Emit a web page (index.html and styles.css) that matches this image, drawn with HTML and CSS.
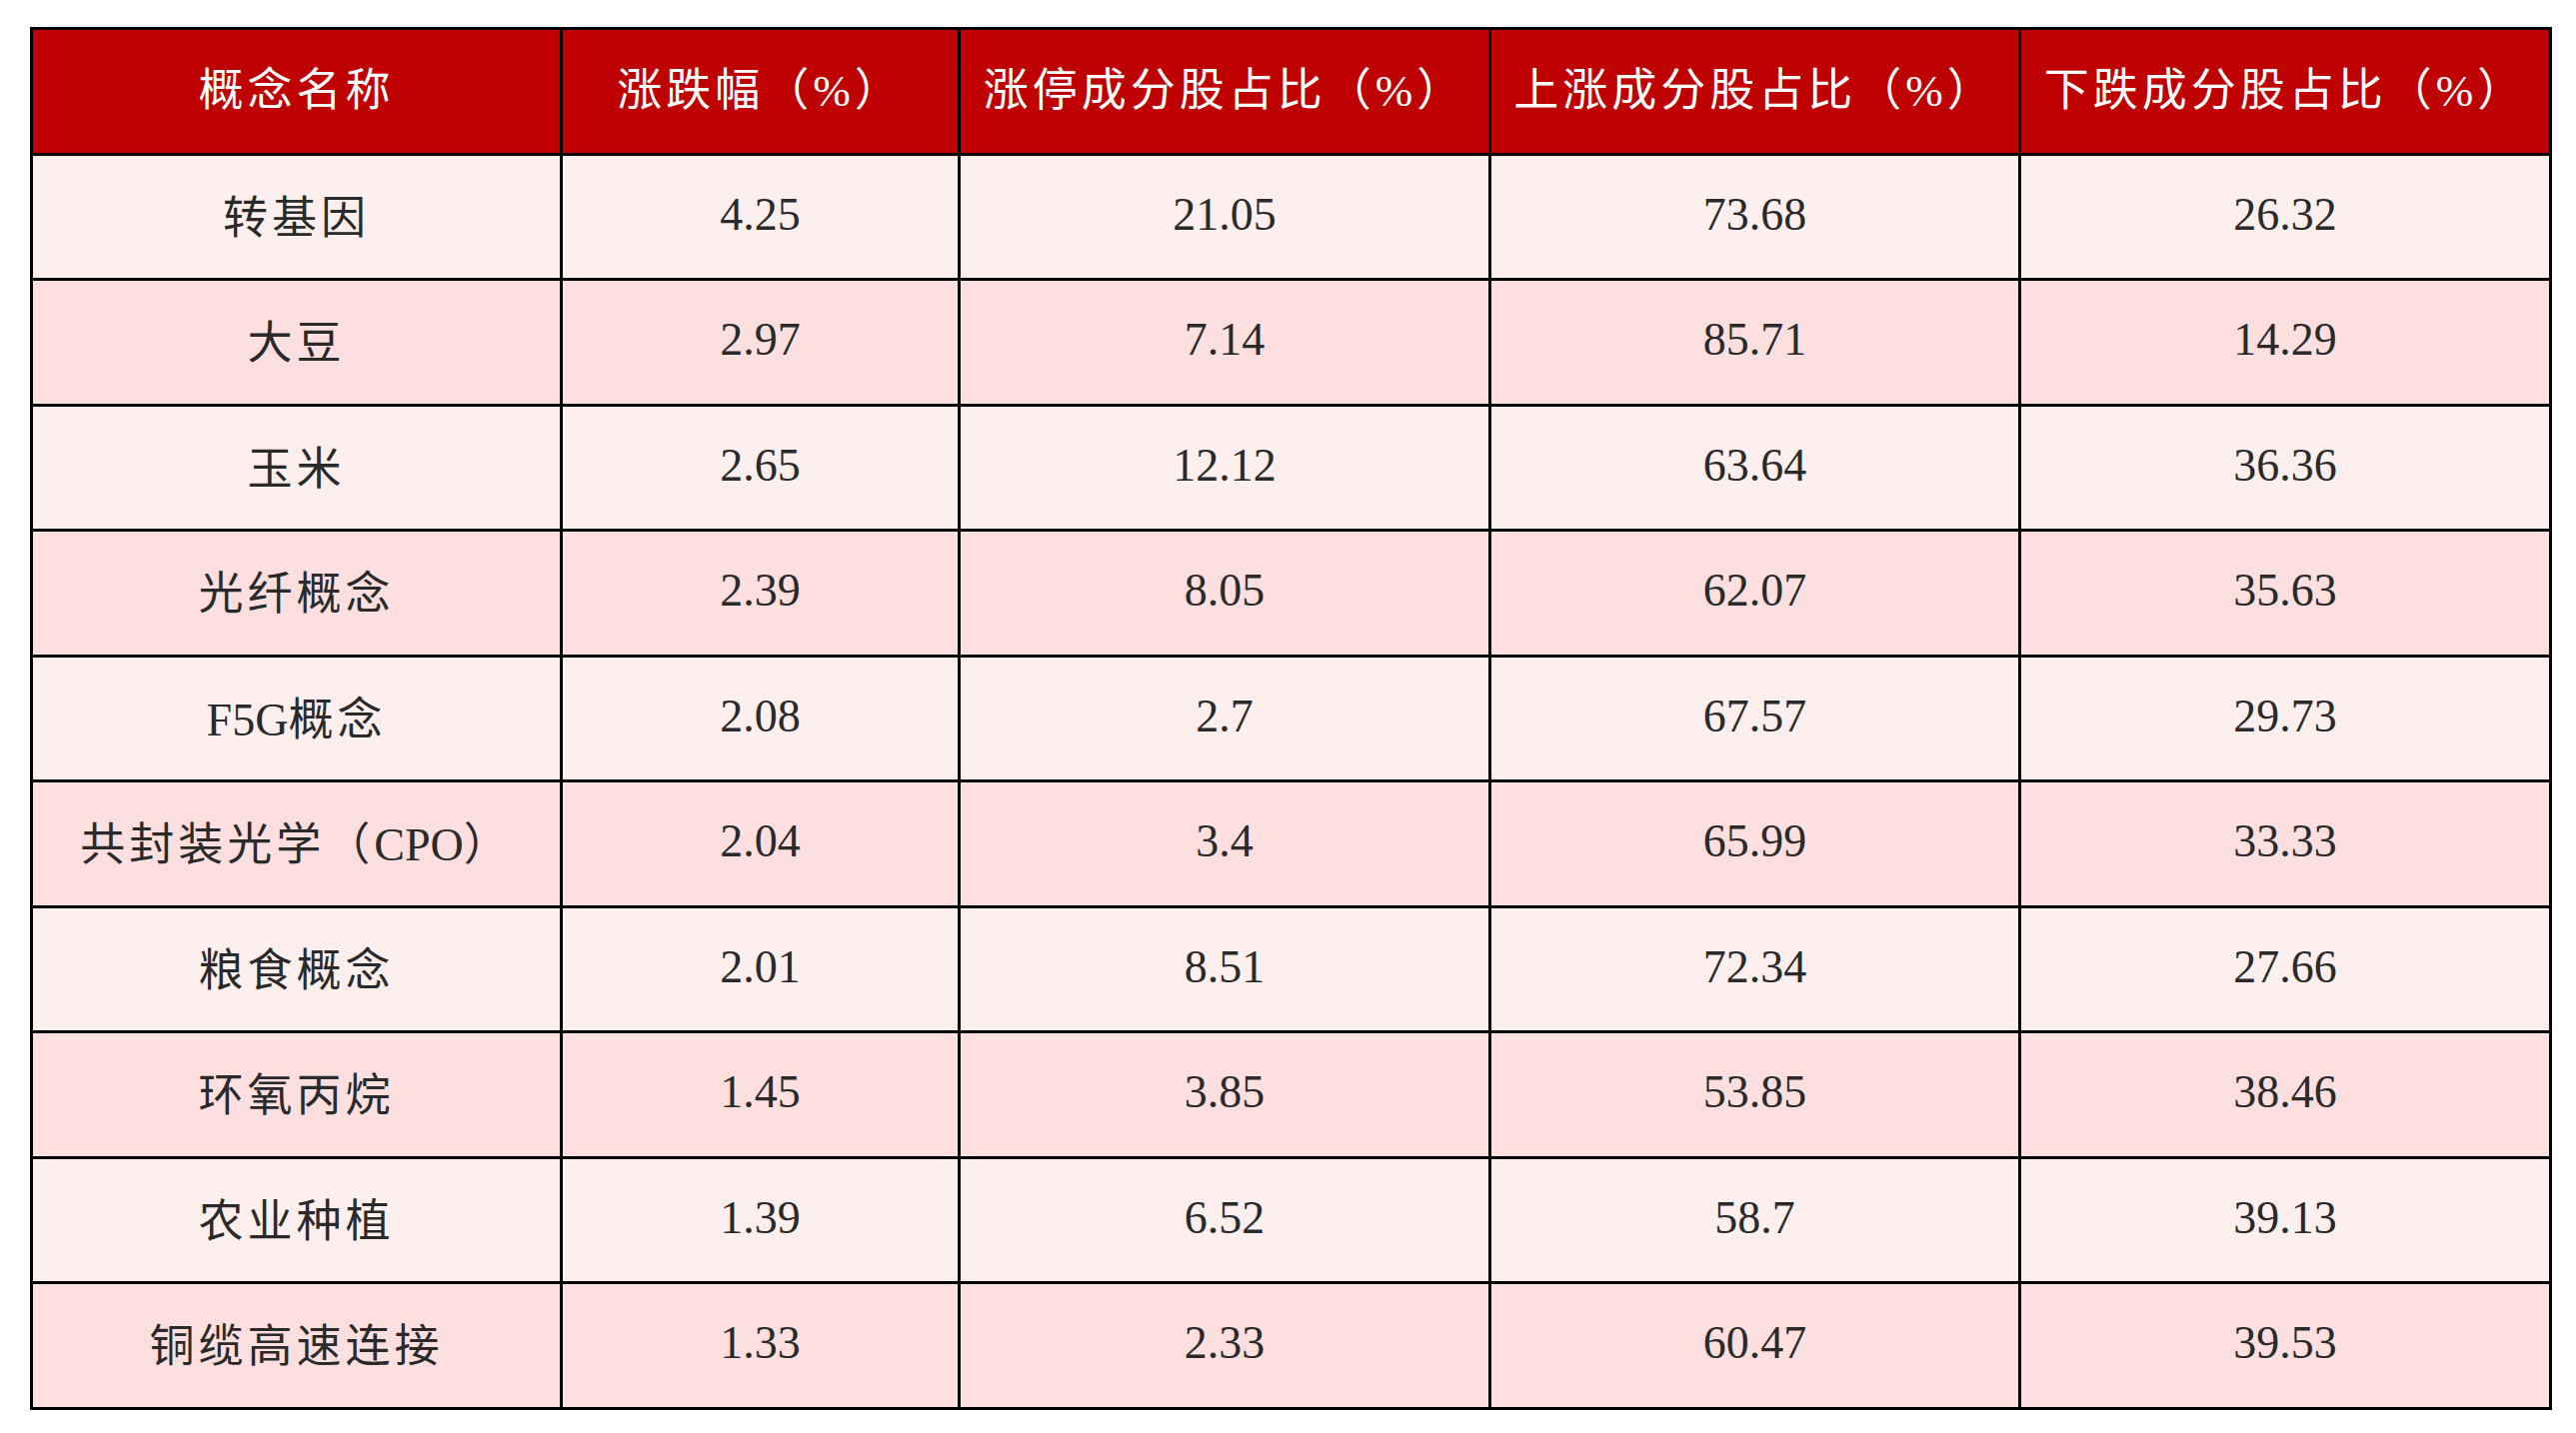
FILE: index.html
```html
<!DOCTYPE html>
<html lang="zh-CN">
<head>
<meta charset="utf-8">
<title>概念板块涨跌统计</title>
<link rel="stylesheet" href="styles.css">
</head>
<body>
<div class="wrap">
<table class="data">
  <colgroup>
    <col class="c-name">
    <col class="c-chg">
    <col class="c-limit">
    <col class="c-up">
    <col class="c-down">
  </colgroup>
  <thead>
    <tr>
      <th>概念名称</th>
      <th>涨跌幅（%）</th>
      <th>涨停成分股占比（%）</th>
      <th>上涨成分股占比（%）</th>
      <th>下跌成分股占比（%）</th>
    </tr>
  </thead>
  <tbody>
    <tr><td class="name">转基因</td><td>4.25</td><td>21.05</td><td>73.68</td><td>26.32</td></tr>
    <tr><td class="name">大豆</td><td>2.97</td><td>7.14</td><td>85.71</td><td>14.29</td></tr>
    <tr><td class="name">玉米</td><td>2.65</td><td>12.12</td><td>63.64</td><td>36.36</td></tr>
    <tr><td class="name">光纤概念</td><td>2.39</td><td>8.05</td><td>62.07</td><td>35.63</td></tr>
    <tr><td class="name"><span class="latin">F5G</span>概念</td><td>2.08</td><td>2.7</td><td>67.57</td><td>29.73</td></tr>
    <tr><td class="name">共封装光学（<span class="latin">CPO</span>）</td><td>2.04</td><td>3.4</td><td>65.99</td><td>33.33</td></tr>
    <tr><td class="name">粮食概念</td><td>2.01</td><td>8.51</td><td>72.34</td><td>27.66</td></tr>
    <tr><td class="name">环氧丙烷</td><td>1.45</td><td>3.85</td><td>53.85</td><td>38.46</td></tr>
    <tr><td class="name">农业种植</td><td>1.39</td><td>6.52</td><td>58.7</td><td>39.13</td></tr>
    <tr><td class="name">铜缆高速连接</td><td>1.33</td><td>2.33</td><td>60.47</td><td>39.53</td></tr>
  </tbody>
</table>
</div>
</body>
</html>
```

FILE: styles.css
```css
html, body {
  margin: 0;
  padding: 0;
  background: #ffffff;
}

.wrap {
  padding: 27px 0 0 30px;
}

.data {
  width: 2520px;
  border-collapse: collapse;
  table-layout: fixed;
  font-family: "Liberation Serif", "Noto Sans CJK SC", serif;
  font-size: 46px;
  color: #2a2a2a;
}

.c-name { width: 530px; }
.c-chg { width: 398px; }
.c-limit { width: 531px; }
.c-up { width: 530px; }
.c-down { width: 531px; }

.data th,
.data td {
  border: 3.5px solid #000000;
  height: 125.5px;
  padding: 0 0 5px 0;
  text-align: center;
  vertical-align: middle;
  box-sizing: border-box;
}

.data th {
  background: #bf0000;
  color: #ffffff;
  font-weight: 400;
  letter-spacing: 4px;
  font-size: 45px;
  padding-bottom: 10px;
}

.data td.name {
  letter-spacing: 4px;
  font-size: 45px;
}

.data .latin {
  letter-spacing: 0;
  font-size: 46px;
}

.data tbody tr:nth-child(odd) td {
  background: #feefef;
}

.data tbody tr:nth-child(even) td {
  background: #fddfe0;
}
```
